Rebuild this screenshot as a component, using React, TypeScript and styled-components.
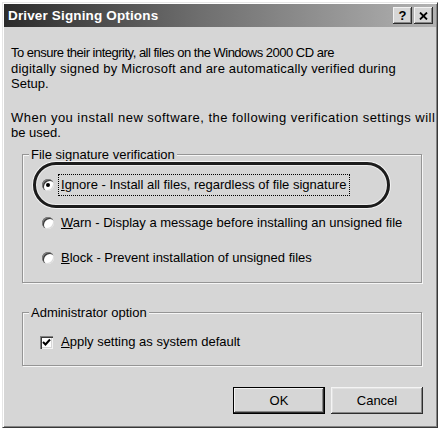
import React from 'react';
import styled, { createGlobalStyle } from 'styled-components';

const GlobalStyle = createGlobalStyle`
  html,
  body {
    margin: 0;
    padding: 0;
    background: #ffffff;
  }
  body {
    font-family: 'Liberation Sans', Arial, sans-serif;
    color: #000;
  }
`;

const Window = styled.div`
  box-sizing: border-box;
  margin: 2px 0 0 2px;
  width: 436px;
  height: 426px;
  padding: 1px;
  background: #d6d6d6;
  border: 1px solid;
  border-color: #e6e6e6 #383838 #383838 #e6e6e6;
  box-shadow: inset 1px 1px 0 #ffffff, inset -1px -1px 0 #858585;
  display: flex;
  flex-direction: column;
`;

const TitleBar = styled.div`
  height: 23px;
  flex-shrink: 0;
  display: flex;
  align-items: center;
  justify-content: space-between;
  padding: 0 3px 0 4px;
  background: linear-gradient(90deg, #2c2c2c 0%, #6e6e6e 45%, #b2b2b2 100%);
`;

const Title = styled.span`
  color: #ffffff;
  font-weight: bold;
  font-size: 13.5px;
  letter-spacing: 0.15px;
`;

const Controls = styled.div`
  display: flex;
  gap: 2px;
`;

const CaptionButton = styled.div`
  box-sizing: border-box;
  width: 19px;
  height: 17px;
  display: flex;
  align-items: center;
  justify-content: center;
  background: #d6d6d6;
  box-shadow: inset -1px -1px 0 #2e2e2e, inset 1px 1px 0 #f2f2f2,
    inset -2px -2px 0 #888888;
  font-weight: bold;
  font-size: 13px;
  line-height: 1;
`;

const Body = styled.div`
  flex: 1;
  display: flex;
  flex-direction: column;
  padding: 18px 0 0 7px;
  font-size: 13px;
  line-height: 15.5px;
`;

const Text = styled.p<{ $gap?: number }>`
  margin: ${(p) => p.$gap ?? 0}px 0 0;
  white-space: nowrap;
`;

// the dialog's own wrapping: each line keeps its width from the screenshot
const Line = styled.span<{ $track?: number }>`
  display: block;
  letter-spacing: ${(p) => p.$track ?? 0}px;
`;

const Group = styled.fieldset<{ $gap: number }>`
  box-sizing: border-box;
  width: 400px;
  margin: ${(p) => p.$gap}px 0 0 11px;
  padding: 0;
  min-inline-size: 0;
  border: 1px solid #959595;
  box-shadow: inset 1px 1px 0 #f6f6f6, 1px 1px 0 #f6f6f6;
`;

const Legend = styled.legend`
  margin-left: 6px;
  padding: 0 2px;
  line-height: 15.5px;
  background: #d6d6d6;
`;

const OptionList = styled.div`
  display: flex;
  flex-direction: column;
  padding-bottom: 9px;
`;

const Highlight = styled.div`
  box-sizing: border-box;
  margin-left: 10px;
  width: 357px;
  height: 46px;
  border: 3px solid #1c1c1c;
  border-radius: 23px;
  box-shadow: 0 0 0 1px #f4f4f4, inset 0 0 0 1px #ececec;
  display: flex;
  align-items: center;
  padding-left: 6px;
`;

const Row = styled.div<{ $gap?: number; $indent?: number }>`
  height: 30px;
  margin-top: ${(p) => p.$gap ?? 0}px;
  padding-left: ${(p) => p.$indent ?? 19}px;
  display: flex;
  align-items: center;
  white-space: nowrap;
`;

const Radio = styled.span<{ $checked?: boolean }>`
  position: relative;
  width: 12px;
  height: 12px;
  flex-shrink: 0;
  margin-right: 4px;
  border-radius: 50%;
  background: #ffffff;
  box-shadow: inset 1px 1px 0 #808080, inset 2px 2px 0 #3a3a3a,
    inset -1px -1px 0 #dcdcdc;

  &::after {
    content: '';
    display: ${(p) => (p.$checked ? 'block' : 'none')};
    position: absolute;
    left: 4px;
    top: 4px;
    width: 4px;
    height: 4px;
    border-radius: 50%;
    background: #000;
  }
`;

const Label = styled.span<{ $focus?: boolean }>`
  padding: 2px 3px 3px 2px;
  border: 1px dotted ${(p) => (p.$focus ? '#000' : 'transparent')};
`;

const Check = styled.span`
  box-sizing: border-box;
  width: 13px;
  height: 13px;
  flex-shrink: 0;
  margin-right: 5px;
  display: flex;
  align-items: center;
  justify-content: center;
  background: #ffffff;
  box-shadow: inset 1px 1px 0 #808080, inset 2px 2px 0 #3a3a3a,
    inset -1px -1px 0 #f4f4f4, inset -2px -2px 0 #d6d6d6;
`;

const CheckList = styled.div`
  padding: 7px 0 7px;
`;

const ButtonBar = styled.div`
  display: flex;
  justify-content: flex-end;
  gap: 6px;
  margin: 21px 13px 0 0;
`;

const Button = styled.button<{ $default?: boolean }>`
  box-sizing: border-box;
  width: 92px;
  height: 27px;
  padding: 0;
  font-family: 'Liberation Sans', Arial, sans-serif;
  font-size: 13px;
  color: #000;
  background: #d6d6d6;
  border: ${(p) => (p.$default ? '1px solid #000' : 'none')};
  box-shadow: ${(p) =>
    p.$default
      ? 'inset -1px -1px 0 #2e2e2e, inset 1px 1px 0 #f4f4f4, inset -2px -2px 0 #888'
      : 'inset -1px -1px 0 #2e2e2e, inset 1px 1px 0 #f4f4f4, inset -2px -2px 0 #888, inset 2px 2px 0 #e2e2e2'};
`;

const CloseIcon = () => (
  <svg width="9" height="8" viewBox="0 0 9 8">
    <path d="M1 0.5 L8 7.5 M8 0.5 L1 7.5" stroke="#000" strokeWidth="1.8" />
  </svg>
);

const TickIcon = () => (
  <svg width="9" height="9" viewBox="0 0 9 9">
    <path d="M1 4 L3.5 6.5 L8 1.5" fill="none" stroke="#000" strokeWidth="2" />
  </svg>
);

const App = () => (
  <>
    <GlobalStyle />
    <Window>
      <TitleBar>
        <Title>Driver Signing Options</Title>
        <Controls>
          <CaptionButton>?</CaptionButton>
          <CaptionButton>
            <CloseIcon />
          </CaptionButton>
        </Controls>
      </TitleBar>
      <Body>
        <Text>
          <Line $track={-0.5}>
            To ensure their integrity, all files on the Windows 2000 CD are
          </Line>
          <Line $track={0.2}>
            digitally signed by Microsoft and are automatically verified during
          </Line>
          <Line>Setup.</Line>
        </Text>
        <Text $gap={18}>
          <Line $track={0.47}>
            When you install new software, the following verification settings will
          </Line>
          <Line>be used.</Line>
        </Text>

        <Group $gap={6}>
          <Legend>File signature verification</Legend>
          <OptionList>
            <Highlight>
              <Radio $checked />
              <Label $focus>
                <u>I</u>gnore - Install all files, regardless of file signature
              </Label>
            </Highlight>
            <Row>
              <Radio />
              <Label>
                <u>W</u>arn - Display a message before installing an unsigned file
              </Label>
            </Row>
            <Row $gap={5}>
              <Radio />
              <Label>
                <u>B</u>lock - Prevent installation of unsigned files
              </Label>
            </Row>
          </OptionList>
        </Group>

        <Group $gap={22}>
          <Legend>Administrator option</Legend>
          <CheckList>
            <Row $indent={17}>
              <Check>
                <TickIcon />
              </Check>
              <Label>
                <u>A</u>pply setting as system default
              </Label>
            </Row>
          </CheckList>
        </Group>

        <ButtonBar>
          <Button $default>OK</Button>
          <Button>Cancel</Button>
        </ButtonBar>
      </Body>
    </Window>
  </>
);

export default App;
